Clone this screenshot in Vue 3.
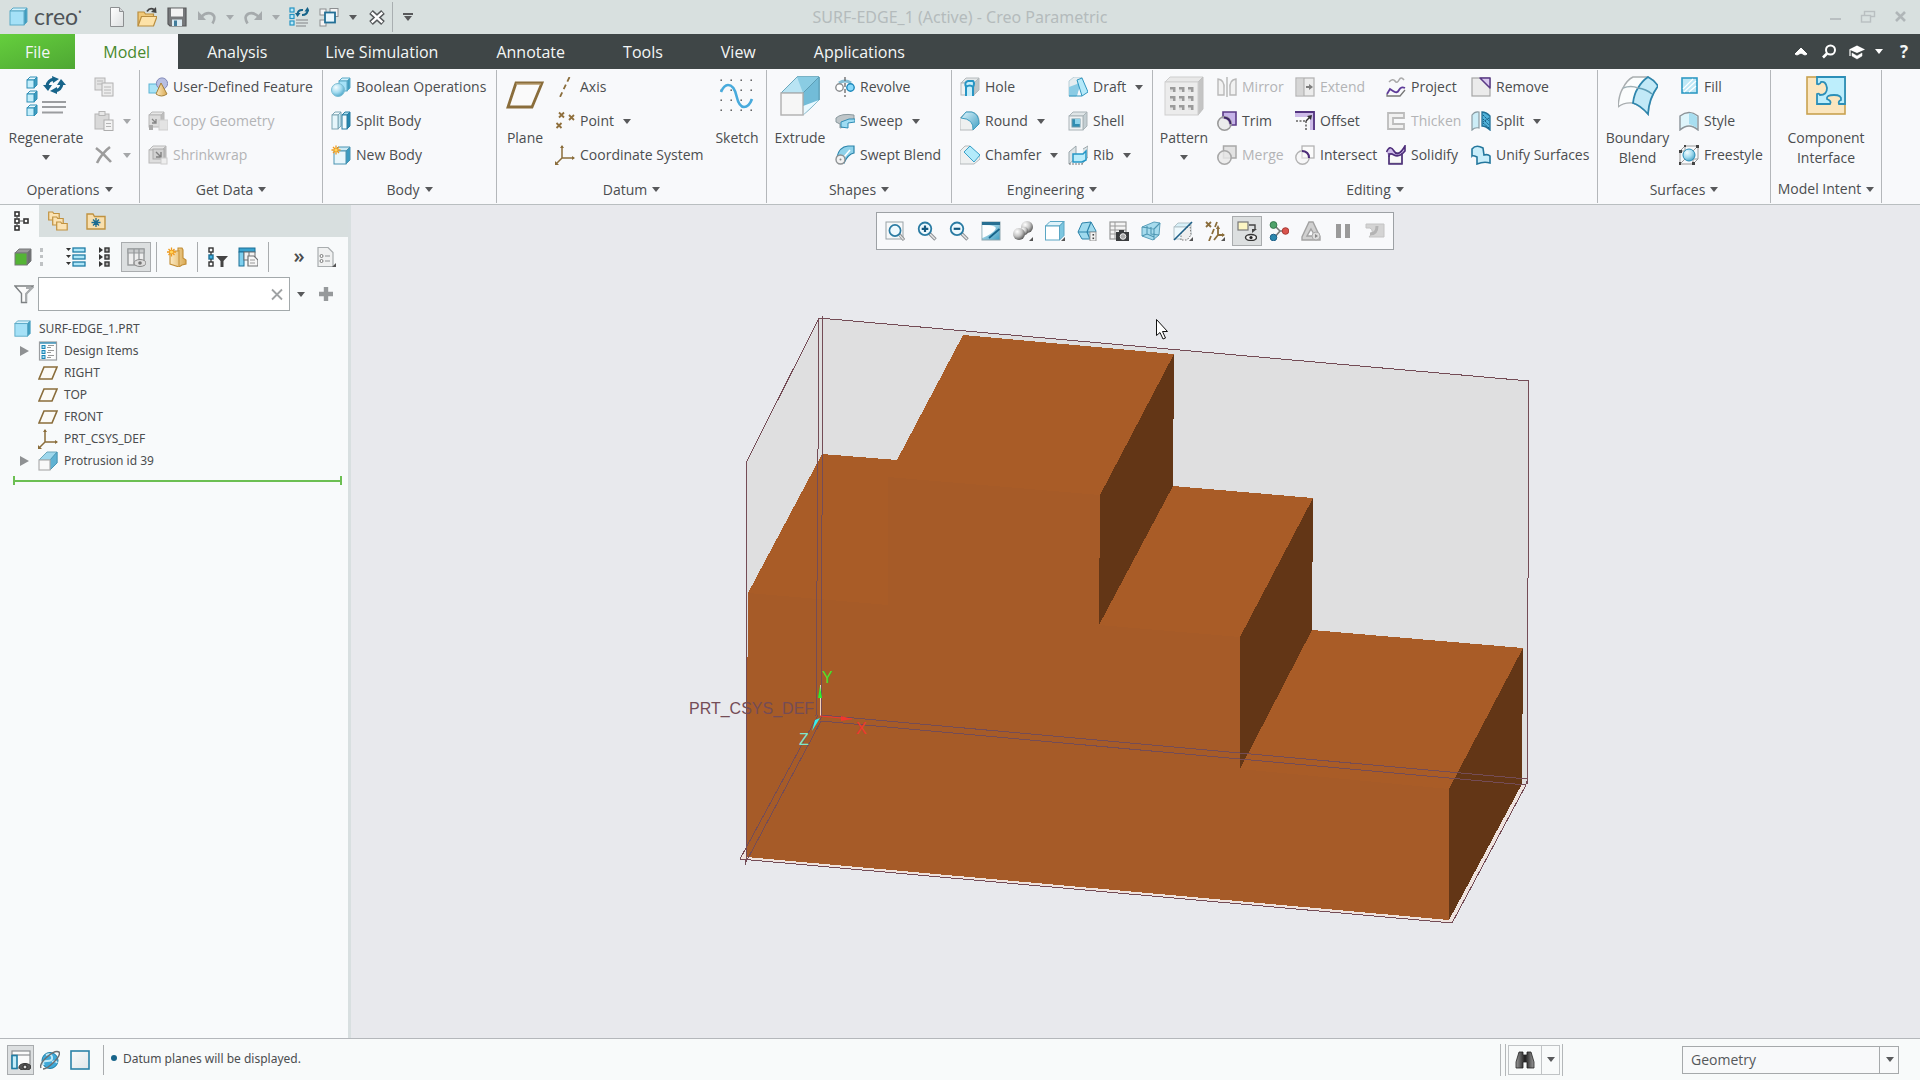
<script setup>
import { h, ref } from 'vue'

const poly = (pts, fill, stroke = 'none', extra = '') =>
  `<polygon points="${pts}" fill="${fill}" stroke="${stroke}" stroke-linejoin="round" ${extra}/>`
const path = (d, stroke, width = 1.5, fill = 'none', extra = '') =>
  `<path d="${d}" fill="${fill}" stroke="${stroke}" stroke-width="${width}" ${extra}/>`
const rect = (x, y, w, hh, fill, stroke = 'none', width = 1) =>
  `<rect x="${x}" y="${y}" width="${w}" height="${hh}" fill="${fill}" stroke="${stroke}" stroke-width="${width}"/>`
const circle = (x, y, r, fill, stroke = 'none', width = 1) =>
  `<circle cx="${x}" cy="${y}" r="${r}" fill="${fill}" stroke="${stroke}" stroke-width="${width}"/>`
const box = (x, y, w, hh, d, front, top, side, line) =>
  poly(`${x},${y + d} ${x + d},${y} ${x + w + d},${y} ${x + w},${y + d}`, top, line) +
  poly(`${x + w},${y + d} ${x + w + d},${y} ${x + w + d},${y + hh} ${x + w},${y + hh + d}`, side, line) +
  rect(x, y + d, w, hh, front, line)
const bluebox = (x, y, w, hh, d) => box(x, y, w, hh, d, '#a5e1f7', '#d3f1fb', '#3f9dbf', '#5aa9c6')
const star = (x, y) => path(`M${x} ${y - 4.5}v9M${x - 4.5} ${y}h9M${x - 3} ${y - 3}l6 6M${x - 3} ${y + 3}l6 -6`, '#f09a1c', 1.3) + circle(x, y, 1.6, '#ffd65c')
const lens = sign => path('M12.5 12.5L18.5 18.5', '#8e9194', 3.4) + path('M13 13L18 18', '#e8e8e8', 1.4) + circle(8, 7.8, 6.3, '#eef9fe', '#2a7ba3', 1.8) + path(sign, '#14587f', 2.2)
const corner = poly('20,16 20,20 16,20', '#555')

const icons = {
  cube: bluebox(1, 1, 14, 14, 3),
  page: path('M3.5 .5h9l4 4v15h-13z', '#8c8f91', 1, 'url(#gPage)') + path('M12.5 .5v4h4', '#8c8f91', 1, '#d5d8da'),
  open: path('M1 5h6l1.5 2h8v11H1z', '#b98d3f', 1.2, '#f0c878') + path('M4.5 9.5H20L16.5 19H1z', '#b98d3f', 1.2, '#fde2a8') + path('M10 4.5Q13 0 17 2.5', '#444', 1.8) + poly('19,0 19.5,6 14,5', '#444'),
  save: path('M1 1h18v18H3l-2 -2z', '#58595b', 1.2, '#77797b') + rect(4, 1.5, 12, 8, '#f3f3f3') + rect(5, 12.5, 10, 6.5, '#dcebf2') + rect(7, 13.5, 3, 5.5, '#417d9b'),
  undo: path('M4 10Q9 5 14 6.5Q20 9 15.5 16.5', '#a5aaac', 2.6) + poly('1,4 1,13 9,13', '#a5aaac'),
  redo: path('M16 10Q11 5 6 6.5Q0 9 4.5 16.5', '#a5aaac', 2.6) + poly('19,4 19,13 11,13', '#a5aaac'),
  regenSmall: [1, 7.5, 14].map(y => rect(1, y, 4, 4, '#bfe9f8', '#2494c4', 1.2)).join('') + path('M8.5 7Q9 2.5 14 3', '#17648a', 2) + path('M18.5 3Q18.5 8 13 8', '#17648a', 2) + poly('6,6 11.5,6 8.5,10', '#17648a') + poly('15.5,4.5 21,4.5 18.5,0', '#17648a') + path('M7 13h12M7 16h12M7 19h10', '#9fa3a5', 1.4),
  windows: rect(1, 2, 6, 6, '#f4f4f4', '#8b8e90') + rect(11, 1.5, 8, 8, '#f4f4f4', '#8b8e90') + rect(1, 13, 6, 6, '#f4f4f4', '#8b8e90') + rect(6, 5.5, 10, 10, '#e9f7fd', '#226f96', 1.8),
  closeWin: path('M4 5l12 11M16 5l-12 11', '#55585a', 5.4) + path('M4.700 5.600l10.600 9.800M15.300 5.600l-10.600 9.800', '#fff', 2.4),
  minimize: rect(5, 11, 11, 2, '#b9bfc1'),
  restore: rect(6.5, 4.5, 10, 5, 'none', '#b9bfc1', 1.4) + rect(3.5, 8.5, 9, 6.5, '#d8e0df', '#b9bfc1', 1.4),
  shut: path('M5 5l9 9M14 5l-9 9', '#b0b6b8', 2.6),
  up: path('M4 12l6 -6l6 6l-2 1l-4 -2l-4 2z', '#fff', 1, '#fff'),
  search: circle(11.5, 8, 4.5, 'none', '#fff', 2) + path('M8 11.5L4 15.5', '#fff', 2.6),
  hat: poly('10,3.5 18,7.5 10,11 2,7.5', '#fff') + path('M5 11l5 3l5 -3v3l-5 3l-5 -3z', '#fff', 0.5, '#fff') + path('M3 8v6', '#fff', 1.2),
  regen: [0, 14, 28].map(y => box(1, y + 1, 7, 8, 3, '#c4eefb', '#e8f8fd', '#3f9dbf', '#2f8fb6')).join('') + path('M21 10Q22 4 28 3', '#17648a', 3) + path('M36 8Q35 14 29 15', '#17648a', 3) + poly('17,9 26,9 22,15', '#17648a') + poly('31,9 40,9 35,3', '#17648a') + poly('26,0 33,3 27,7', '#17648a') + poly('31,11 24,15 31,18', '#17648a') + path('M16 26h24M16 31h24M16 36.5h21', '#9b9da0', 2),
  copy: rect(1, 1, 10, 12, '#e4e4e4', '#b5b5b5') + rect(8, 6, 11, 13, '#ededed', '#b0b0b0') + path('M10 10h7M10 13h7M10 16h7M3 4h6M3 7h5', '#b8b8b8', 1),
  paste: rect(1, 3, 14, 15, '#d9d9d9', '#b5b5b5') + rect(5, 0.5, 6, 4, '#e8e8e8', '#b5b5b5') + rect(10, 9, 9, 10.5, '#f3f3f3', '#adadad') + path('M12 12.5h5M12 15.5h5', '#b5b5b5', 1),
  del: path('M2 3Q10 9 17 17M16 2Q8 8 3 18', '#9c9c9c', 2.6),
  udf: rect(1, 7, 10, 9, '#a9e3f6', '#5cb4d4') + circle(14, 6.5, 5.6, '#b8bfe2', '#8088b8') + path('M13 6L19 17Q13.5 21 8 17z', '#a5813c', 1, 'url(#gTan)'),
  copyGeo: box(1, 1, 12, 12, 3, '#dcdcdc', '#e6e6e6', '#bdbdbd', '#b8b8b8') + rect(11, 9, 9, 10, '#e3e3e3', '#cfcfcf') + path('M4 8l4 4M8 8v4h-4', '#858585', 1.3) + rect(1, 14, 4, 5, '#aaa'),
  shrink: box(1, 1, 13, 13, 4, '#dedede', '#e6e6e6', '#bdbdbd', '#b8b8b8') + rect(5, 4, 11, 10, '#d0d0d0', '#aaa') + path('M8 7l5 5M13 7v5h-5', '#7f7f7f', 1.4) + rect(13, 13, 6, 6, '#eee', '#ccc'),
  bool: bluebox(8, 1, 8, 10, 3) + circle(7, 13, 6.5, 'url(#gBall)', '#7bbdd3'),
  splitBody: box(1, 1, 6, 14, 3, '#e6f6fb', '#f5fbfd', '#c3e6f1', '#7da5b4') + box(11, 1, 5, 14, 3, '#f2fafd', '#a8dbec', '#2687b0', '#2a7ea2'),
  newBody: box(3, 2, 12, 13, 4, '#e8f6fb', '#cdeaf4', '#3b9cc1', '#4a94b2') + star(5, 5),
  plane: `<path d="M11 7h26L27 31H3z" fill="#fafafa" stroke="#8a6d3b" stroke-width="2.8"/><path d="M11 8h25" stroke="#cbb183"/>`,
  planeSmall: path('M6 4h13l-5 12H1z', '#8a6d3b', 1.6, '#fbfaf6'),
  axis: path('M14.5 0L5 20', '#8a6d3b', 1.8, 'none', 'stroke-dasharray="5 3.5"'),
  point: path('M4 1.5l5 5M9 1.5l-5 5M14 4l5 5M19 4l-5 5M1.5 12l5 5M6.5 12l-5 5', '#8f6f3c', 1.8),
  csys: path('M7 1v12h12M7 13L1 19', '#8a6d3b', 1.5) + poly('5,3 7,0 9,3', '#8a6d3b') + poly('17,11 20,13 17,15', '#8a6d3b') + poly('0,20 0,16 4,20', '#8a6d3b'),
  sketch: [4, 14, 24, 34].map(y => [4, 14, 24, 34].map(x => rect(x - 0.5, y - 0.5, 1.4, 1.4, '#444')).join('')).join('') + path('M4 16Q7 9 11 9Q17 9 19.5 20Q22 31 27 31Q32 31 35 23', '#48abdd', 2.6),
  extrude: poly('1,17 17,1 39,1 39,24 23,39 23,17', '#9ed7ec', '#6da8bc') + poly('17,1 39,1 39,24 17,24', 'url(#gBlue)', '#5ba5c0') + poly('1,17 17,1 39,1 23,17', '#b9e4f3', '#6da8bc') + poly('17,1 39,1 23,17', '#8accE3') + poly('23,17 39,1 39,24 23,39', '#72bcd8', '#5b9db5') + poly('23,30 39,24 23,39', '#e8f9ff') + rect(1, 17, 22, 22, '#f6f6f6', '#b0b0b0', 1.4),
  extrudeSmall: poly('1,9 9,1 19,1 19,12 12,19 12,9', '#9ed7ec', '#6da8bc') + poly('12,9 19,1 19,12 12,19', '#5fb2d3', '#4b97b7') + rect(1, 9, 11, 10, '#f8f8f8', '#b0b0b0', 1.2),
  revolve: path('M4 6Q10 2 16 6', '#84bdd3', 3) + circle(4.5, 10.5, 3.7, '#fff', '#8b8e90', 1.4) + circle(15.5, 10.5, 3.7, '#8adafa', '#1d88bb', 1.4) + path('M10 0v20', '#666', 1.3, 'none', 'stroke-dasharray="4 2"'),
  sweep: path('M1 7Q6 2 19 4v4Q12 9 12 15l-7 2v-4L1 11z', '#8a999e', 1, '#bfc6c9') + path('M6 11l8 -3h6v3l-7 1v5l-7 -1z', '#2f8db5', 1, '#9fdcf2'),
  sweptBlend: path('M2 12Q4 2 13 1h6v7Q13 9 9 18z', '#2a83aa', 1.2, '#8fd2ea') + path('M9 12L15 5', '#fff', 1.6) + circle(5.5, 14.5, 4.5, '#f2f2f2', '#8d9193', 1.4) + circle(5.5, 14.5, 1, '#888'),
  hole: box(1, 1, 13, 12, 5, '#f0f2f2', '#e3e7e8', '#bcc5c8', '#b5babc') + path('M6 19v-9Q4 5 8 4h5Q15 6 13 10v9M6 10q4 -3 7 0', '#2695c4', 2, '#c9effb'),
  round: path('M0 7L6 1h5Q19 2 19 10v3l-6 6H0z', '#b5babc', 1, '#eef0f0') + path('M6 1h6Q19 3 19 13l-6 6Q14 8 1 7z', '#3c9cc0', 1, 'url(#gBlue)'),
  chamfer: path('M0 6L5 1h5l10 10v3l-6 5H0z', '#b5babc', 1, '#eef0f0') + poly('10,1 20,10 14,17 4,7', '#b3ebfb', '#3aa0c8'),
  draft: poly('1,4 6,0 14,0 8,19 1,19', '#e6edf0', '#b9cfd7') + poly('1,10 9,7 14,1 9,19 1,19', '#8acbe4') + poly('9,3 14,1 20,15 14,19', '#b5e9f9', '#2f95bf') + path('M1 19h13', '#2f95bf', 1),
  shell: box(1, 1, 14, 14, 4, '#eef1f2', '#dfe5e7', '#c3ced2', '#a9b3b7') + rect(4, 8, 8, 8, '#2f8eb3', '#6f9aa9') + rect(7, 8, 5, 5, '#8fd3ea'),
  rib: path('M1 7L8 1v12l-7 6zM15 4l5 -3v11l-6 7', '#9ba6ab', 1, '#dce4e7') + path('M5 9h10l3 -3v9l-4 2H5z', '#2496c6', 1.5, '#b9ecfb') + path('M1 19h14', '#777', 1, 'none', 'stroke-dasharray="2 1"'),
  pattern: poly('1,6 6,1 39,1 34,6', '#e8e8e8', '#cdcdcd') + poly('34,6 39,1 39,33 34,39', '#c4c4c4', '#c0c0c0') + rect(1, 6, 33, 33, '#ececec', '#cfcfcf') + [11, 20, 29].map(y => [6, 15, 24].map(x => rect(x, y, 5.5, 5, '#9a9a9a') + rect(x, y + 2.5, 3, 2.5, '#dedede')).join('')).join(''),
  mirror: path('M1 2Q8 3 7 12v6H1zM19 2Q12 3 13 12v6h6z', '#b9b9b9', 1.4, '#f2f2f2') + path('M10 0v20', '#a9a9a9', 1.2),
  trim: path('M6 1h13v13h-6Q12 7 6 7z', '#5a3a86', 1.6, '#c6b3e8') + circle(7.5, 12.5, 6.7, '#e4e4e4aa', '#9a9a9a', 1.6) + path('M7 6.5Q13 7 13.5 13', '#3d2366', 1.8),
  merge: rect(6.5, 1, 12.5, 12, '#e2e2e2', '#a8a8a8', 1.5) + circle(7.5, 12.5, 6.7, '#e9e9e9cc', '#a8a8a8', 1.6),
  extend: rect(1, 1, 18, 18, '#ececec', '#b5b5b5', 1.3) + rect(2, 2, 7, 16, '#d6d6d6') + path('M9 1v18', '#aaa', 1) + path('M11 10h4', '#7d7d7d', 2) + poly('14,7 18,10 14,13', '#7d7d7d'),
  offset: rect(0, 1, 20, 5, '#cdbbe8') + rect(15, 1, 5, 18, '#cdbbe8') + path('M0 1h19v18', '#533480', 1.8) + path('M1 10h10M11 10v9', '#666', 1.6, 'none', 'stroke-dasharray="2 1.5"') + path('M11 10l4 -4', '#333', 1.5) + poly('17,4 12,5 16,9', '#333'),
  intersect: rect(7, 1, 12, 12, '#fbfbfb', '#b3b3b3', 1.3) + circle(7.5, 12.5, 6.7, '#f6f6f688', '#b3b3b3', 1.4) + path('M7 6Q14 6.5 14 13', '#4c2c79', 2),
  project: path('M3 5q4 -4 6 -1t4 -1t5 0', '#aaa', 1.6) + path('M1 17L4 12l3 2q4 3 6 -1t6 -2', '#5f3c99', 1.8) + path('M1 17v2h13l5 -6', '#777', 1.3),
  thicken: path('M2 2h16v5H7v6h11v5H2z', '#bcbcbc', 1.8, '#f1f1f1'),
  solidify: rect(3, 8, 13, 10.5, '#f8f8f8', '#6a6a7a', 1.4) + path('M0.5 7Q4 -1 8 6t11 -5v5Q13 13 8 10T3 12', '#4c2c79', 1.6, '#cdbbe8') + path('M3 8v11h13V8', '#533480', 1.5),
  remove: rect(1, 1, 18, 18, '#ebebeb', '#a5a5a5', 1.2) + poly('9,1 19,1 19,11', '#d9c8ee', '#5a3a86', 'stroke-width="1.5"'),
  split: path('M1 4Q4 0 8 1v16q-4 -1 -7 2z', '#8a9ba2', 1.2, '#ccedf7') + path('M11 1Q15 1 19 5v14q-4 -4 -8 -4z', '#1f6f96', 1.3, '#51b2da') + path('M12 4l6 6M12 8l6 6M12 12l6 5M18 7l-6 4', '#155b80', 1, 'none', 'stroke-dasharray="2 1"'),
  unify: path('M1 4Q5 -1 12 3l1 7Q17 9 19 11v7q-6 -2 -13 1v-7Q2 10 1 11z', '#24779d', 1.6, '#caeefa'),
  blend: path('M0 31Q1 18 5 12Q9 4 15 1H30Q36 4 40 10Q31 22 30 38Q22 29 15 27Q6 26 0 31z', '#a9aeb0', 1.4, '#fbfdfd') + path('M20 12Q24 5 30 1Q36 4 40 10Q31 22 30 38Q22 29 15 27Q16 18 20 12z', '#2e86ad', 1.8, '#c2e9f7') + path('M20 12Q28 13 34 18', '#5f9db5', 1.6) + path('M5 12Q13 9 20 12', '#9fb0b6', 1.5),
  fill: rect(3, 1, 15, 15, '#bfe8f6', '#2f9ac4', 1.6) + path('M4 12L14 2M5 15L17 4M10 15L17 9', '#fff', 1.2),
  style: path('M1 5Q10 -2 19 5v14q-9 -8 -18 0z', '#8c9499', 1.4, '#dff5fb') + path('M10 2Q15 2 18 6v11q-4 -3 -8 -4z', 'none', 0, '#a8def0'),
  freestyle: rect(1, 6, 13, 13, 'none', '#999', 1) + path('M1 6l5 -5h13v13l-5 5M14 6l5 -5M6 1v13l-5 5M6 14h13', '#9a9a9a', 1) + circle(10, 10, 6, 'url(#gBall)', '#2a8fb9') + rect(0, 5, 3, 3, '#444') + rect(5, 0, 2, 2, '#444') + rect(17, 0, 3, 3, '#444') + rect(13, 17, 3, 3, '#444') + rect(0, 17, 2, 3, '#444'),
  component: rect(1, 1, 38, 37, '#fbe6bf', '#c9a250', 1.6) + path('M11 1H39V28H33Q32 25 35 24Q36 19 28 19Q20 19 21 23Q26 25 24 28H11V18Q13 17 14 19Q21 19 21 12Q20 5 15 6Q14 9 11 8z', '#2c8fb8', 1.8, '#bdeefc'),

  tree: '<g transform="translate(4 0)">' + rect(1, 1, 4, 4, '#fff', '#333', 1.6) + rect(1, 8, 4, 4, '#fff', '#333', 1.6) + rect(1, 15, 4, 4, '#fff', '#333', 1.6) + rect(10, 8, 4, 4, '#fff', '#333', 1.6) + path('M3 5v3M3 12v3M5 10h5', '#555', 1.2) + '</g>',
  folders: [[0, 0], [4, 5], [8, 10]].map(([x, y]) => path(`M${x + 0.7} ${y + 1}h4l1 1.5h5.5v6.5h-10.5z`, '#c09240', 1.2, '#fbe3b4')).join(''),
  favorite: path('M1 3h6l1.5 2.5H19V18H1z', '#c09240', 1.4, '#f8dfae') + path('M10 7v9M5.5 11.5h9M7 8.5l6 6M13 8.5l-6 6', '#1c6b90', 1.3),
  green: box(1, 2, 12, 12, 4, '#54b435', '#999', '#6d6f71', '#77797a'),
  expand: [1, 8, 15].map(y => rect(7, y, 12, 4, '#aee6f8', '#1f7da5', 1.3) + poly(`0,${y} 5,${y} 2.5,${y + 3}`, '#333')).join(''),
  collapse: [1, 8, 15].map(y => rect(9, y, 4, 4, '#aaa', '#333', 1.4) + poly(`3,${y - 1} 7,${y + 2} 3,${y + 5}`, '#333')).join(''),
  columns: rect(2, 2, 16, 16, '#eee', '#96999b', 1.4) + rect(2, 2, 16, 4, '#c9cbcc', '#96999b') + path('M8 2v16M13 2v10', '#96999b', 1.3) + `<ellipse cx="14" cy="16" rx="6" ry="3.5" fill="#ddd" stroke="#888"/>` + circle(14, 16, 1.8, '#777'),
  newFolder: path('M3 4h8V1h4l1 2v8l3 2v4l-4 1l-3 2l-9 -3z', '#c28d35', 1.1, 'url(#gTan)') + path('M12 3v16', '#c28d35', 1) + star(4.5, 5),
  treeFilter: rect(1, 1, 4, 4, '#fff', '#333', 1.4) + rect(1, 8, 4, 4, '#45b3e2', '#1d6f95', 1.4) + rect(1, 15, 4, 4, '#fff', '#333', 1.4) + path('M3 5v3M3 12v3', '#333', 1.2) + poly('8,9 20,9 15.5,14 15.5,20 12.5,20 12.5,14', '#444'),
  treeCols: rect(1, 1, 16, 4, '#3aa3cf', '#1d6f95') + rect(1, 5, 5, 14, '#7ed0ef', '#1d6f95') + rect(6, 5, 11, 8, '#f2f2f2', '#6b6e70') + path('M11 5v8', '#6b6e70', 1) + path('M10 9h6l4 4v6H10z', '#707274', 1.2, '#f7f7f7') + path('M12 13h5M12 16h5', '#999', 1),
  report: path('M2 .5h10l5 5v14H2z', '#a9adaf', 1.2, '#f0f1f1') + path('M9 9h5M9 14h5', '#909395', 1.2) + circle(5.5, 9, 1.5, '#fff', '#777') + circle(5.5, 14, 1.5, '#fff', '#777') + corner,
  funnel: path('M1 2h18L12.5 9.5v9H7.5v-9z', '#7d8183', 1.4, '#fafafa') + path('M12 4h6l-6 6v8', '#a9acae', 2),
  clear: path('M5 5.500l10 10M15 5.500l-10 10', '#9fa2a4', 1.8),
  plus: path('M10 3v14M3 10h14', '#96999b', 4.4),
  items: rect(1.5, 1, 17, 18, '#fdfdfd', '#9a9da0', 1.2) + path('M2 2h16', '#2d8ab3', 1.4) + [4.5, 9.5, 14.5].map(y => rect(4, y, 3, 3, '#9fdef5', '#1f86b5') + path(`M10 ${y}h6M9 ${y + 2}h4`, '#999', 1)).join(''),

  refit: rect(1, 1, 17, 17, '#f6f8f9', '#9aa3a7') + path('M14 13l5 6', '#909496', 3.2) + path('M14.500 14l4 4.500', '#e4e4e4', 1.200) + circle(10, 9.5, 5.6, '#eef9fe', '#2a7ba3', 1.7),
  zoomIn: lens('M8 4.5v6.6M4.7 7.8h6.6'),
  zoomOut: lens('M4.7 7.8h6.6'),
  repaint: rect(1, 1, 18, 18, 'url(#gBlue)', '#8fa7b0') + path('M1.5 4Q18 4 14 9Q11 13 1.5 17z', 'none', 0, '#fbfdfe') + rect(1, 1, 18, 3, '#276f92') + path('M18.5 8L8 17', '#17648a', 1.8),
  shading: circle(14, 6, 6, 'url(#gGray)') + circle(11, 10, 4, 'url(#gGray)') + circle(6, 13, 6, 'url(#gGray)') + corner,
  hidden: box(0.5, 0.5, 14, 14, 4.5, '#fff', '#dff3fa', '#7cc6e0', '#5aa6c4') + corner,
  views: poly('1,11 5,2 14,1 19,10 16,18 5,18', '#9fdaee', '#2d83a9') + path('M1 11h9L14 1M10 11l3 7M10 11h9', '#2d83a9', 1.2) + rect(13, 11, 6, 9, '#f2f2f2', '#999') + rect(15.5, 13, 1.6, 1.6, '#444') + rect(15.5, 16.5, 1.6, 1.6, '#444'),
  viewMgr: rect(1, 1, 16, 17, '#f4f4f4', '#999', 1.2) + path('M1 5h16M1 9h16M1 13h16M6 1v17', '#999', 1) + rect(7, 11, 13, 9, '#3b3d3f') + rect(10, 9, 5, 3, '#3b3d3f') + circle(14, 15.5, 2.8, '#aaa', '#eee'),
  persp: poly('1,6 13,1 19,2 18,14 12,19 1,15', '#a6dbed', '#5aa0bb') + path('M1 6l12 2v11M13 8l6 -6M6 5v8l7 3M6 13l-5 2M10 6v7l8 1', '#4f97b3', 1.1),
  section: box(1, 2, 13, 12, 4, '#eef9fd', '#d8f0f8', '#e4e4e4', '#b2c3c9') + poly('8,19 8,12 17,4 18,14 14,19', '#efefef', '#777', 'stroke-dasharray="1.5 1.5"') + path('M1 19L19 1', '#1d5f87', 1.6) + corner,
  datum: path('M1 1l5 5M6 1l-5 5M12 1l-2 5M9 8l-2 5M6 15l-2 5', '#8a6d3b', 1.8) + path('M13 7v7h6M13 14l-4 5', '#8a6d3b', 1.8) + poly('11,8 13,4 15,8', '#8a6d3b') + poly('17,12 20,14 17,16', '#8a6d3b') + corner,
  annotate: rect(1, 1, 10, 8, '#fdf6c4', '#777', 1.2) + path('M12 4h6v5', '#444', 1.4) + poly('15,8 20,8 15,12', '#444') + `<ellipse cx="14" cy="16.5" rx="5.5" ry="3" fill="#eee" stroke="#333" stroke-width="1.4"/>` + circle(14, 16.5, 1.6, '#222'),
  spin: path('M5 4l6 6h6M11 10l-6 7', '#777', 1.6) + circle(4.5, 4, 3.4, '#4fa36b', '#367a4d') + circle(16.5, 10, 3.3, '#d9544d', '#a93a35') + circle(4.5, 16.5, 3.3, '#2a87ae', '#1d5f87'),
  analysis: path('M8 1h4L19 16v3H1v-3z M10 8l4 7H6z', '#a2a2a2', 1.4, '#d0d0d0', 'fill-rule="evenodd"') + circle(15, 15, 4, '#ddd', '#aaa') + poly('14,13 17,15 14,17', '#888'),
  pause: rect(3, 3, 5, 14, '#9a9a9a') + rect(12, 3, 5, 14, '#9a9a9a'),
  resume: path('M1 3h18v13H4q6 -6 1 -9H1z', '#c4c4c4', 1, '#d4d4d4') + path('M5 13q7 0 7 -8', '#b4b4b4', 3),

  navigator: rect(1, 1, 18, 17, '#fafafa', '#8b8e90', 1.2) + path('M1 5h18', '#8b8e90', 1.2) + rect(1, 5.5, 5, 13, '#c5edf9', '#1f7da5', 1.6) + `<ellipse cx="14" cy="17" rx="6" ry="3.5" fill="#555" stroke="#333"/>` + circle(14, 17, 2, '#ddd', '#222'),
  globe: circle(10, 10.5, 8, '#3fa9d9', '#1f7da5') + path('M6 5q5 -2 6 2t-5 4t-3 4M12 12q4 -2 5 1', '#bfe9f8', 2) + path('M1 18Q-1 14 7 7T19 2Q21 5 14 12T3 19', '#6b6e70', 1.4),
  square: rect(1, 1, 18, 18, 'url(#gSquare)', '#2b83a8', 1.6),
  binoculars: path('M4 2h4v3h4V2h4l3 10v6h-7v-6H8v6H1v-6z', '#222', 0.8, 'url(#gBino)')
}

const Icon = props =>
  h('svg', {
    width: props.size, height: props.size, viewBox: `0 0 ${props.size > 24 ? 40 : 20} ${props.size > 24 ? 40 : 20}`,
    'aria-hidden': 'true', focusable: 'false', innerHTML: icons[props.name]
  })
Icon.props = ['name', 'size']

const quick = [
  { icon: 'page', tip: 'New' }, { icon: 'open', tip: 'Open' }, { icon: 'save', tip: 'Save' },
  { icon: 'undo', tip: 'Undo', menu: 'light' }, { icon: 'redo', tip: 'Redo', menu: 'light' },
  { icon: 'regenSmall', tip: 'Regenerate' }, { icon: 'windows', tip: 'Windows', menu: 'dark' }, { icon: 'closeWin', tip: 'Close' }
]
const tabs = ['File', 'Model', 'Analysis', 'Live Simulation', 'Annotate', 'Tools', 'View', 'Applications']

const item = (icon, text, opt = {}) => ({ icon, text, ...opt })
const off = { off: true }
const menu = { menu: true }
const groups = [
  { id: 'operations', label: 'Operations', cols: [
    { big: 'regen', lines: ['Regenerate'], menu: true },
    { items: [item('copy', '', { off: true, tip: 'Copy' }), item('paste', '', { off: true, menu: true, tip: 'Paste' }), item('del', '', { off: true, menu: true, tip: 'Delete' })] }] },
  { id: 'data', label: 'Get Data', cols: [
    { items: [item('udf', 'User-Defined Feature'), item('copyGeo', 'Copy Geometry', off), item('shrink', 'Shrinkwrap', off)] }] },
  { id: 'body', label: 'Body', cols: [
    { items: [item('bool', 'Boolean Operations'), item('splitBody', 'Split Body'), item('newBody', 'New Body')] }] },
  { id: 'datum', label: 'Datum', cols: [
    { big: 'plane', lines: ['Plane'] },
    { items: [item('axis', 'Axis'), item('point', 'Point', menu), item('csys', 'Coordinate System')] },
    { big: 'sketch', lines: ['Sketch'] }] },
  { id: 'shapes', label: 'Shapes', cols: [
    { big: 'extrude', lines: ['Extrude'] },
    { items: [item('revolve', 'Revolve'), item('sweep', 'Sweep', menu), item('sweptBlend', 'Swept Blend')] }] },
  { id: 'engineering', label: 'Engineering', cols: [
    { items: [item('hole', 'Hole'), item('round', 'Round', menu), item('chamfer', 'Chamfer', menu)] },
    { items: [item('draft', 'Draft', menu), item('shell', 'Shell'), item('rib', 'Rib', menu)] }] },
  { id: 'editing', label: 'Editing', cols: [
    { big: 'pattern', lines: ['Pattern'], menu: true },
    { items: [item('mirror', 'Mirror', off), item('trim', 'Trim'), item('merge', 'Merge', off)] },
    { items: [item('extend', 'Extend', off), item('offset', 'Offset'), item('intersect', 'Intersect')] },
    { items: [item('project', 'Project'), item('thicken', 'Thicken', off), item('solidify', 'Solidify')] },
    { items: [item('remove', 'Remove'), item('split', 'Split', menu), item('unify', 'Unify Surfaces')] }] },
  { id: 'surfaces', label: 'Surfaces', cols: [
    { big: 'blend', lines: ['Boundary', 'Blend'] },
    { items: [item('fill', 'Fill'), item('style', 'Style'), item('freestyle', 'Freestyle')] }] },
  { id: 'intent', label: 'Model Intent', cols: [{ big: 'component', lines: ['Component', 'Interface'] }] }
]

const tree = [
  { icon: 'items', text: 'Design Items', open: true },
  { icon: 'planeSmall', text: 'RIGHT' },
  { icon: 'planeSmall', text: 'TOP' },
  { icon: 'planeSmall', text: 'FRONT' },
  { icon: 'csys', text: 'PRT_CSYS_DEF' },
  { icon: 'extrudeSmall', text: 'Protrusion id 39', open: true }
]
const viewTools = [
  ['refit', 'Refit'], ['zoomIn', 'Zoom In'], ['zoomOut', 'Zoom Out'], ['repaint', 'Repaint'], ['shading', 'Rendering'],
  ['hidden', 'Display Style'], ['views', 'Saved Orientations'], ['viewMgr', 'View Manager'], ['persp', 'Perspective'],
  ['section', 'Sections'], ['datum', 'Datum Display'], ['annotate', 'Annotation Display'], ['spin', 'Spin Center'],
  ['analysis', 'Simulate'], ['pause', 'Pause'], ['resume', 'Resume']
]
const search = ref('')
const filter = ref('Geometry')
</script>

<template>
  <div class="app">
    <svg class="defs" width="0" height="0" aria-hidden="true">
      <defs>
        <linearGradient id="gBlue" x1="0" y1="0" x2="1" y2="1"><stop offset="0" stop-color="#dff5fc" /><stop offset="1" stop-color="#3f9ec2" /></linearGradient>
        <linearGradient id="gPage" x1="0" y1="0" x2="1" y2="1"><stop offset="0" stop-color="#ffffff" /><stop offset="1" stop-color="#dcdfe0" /></linearGradient>
        <linearGradient id="gTan" x1="0" y1="0" x2="1" y2="0"><stop offset="0" stop-color="#fdebc4" /><stop offset="1" stop-color="#d9a952" /></linearGradient>
        <linearGradient id="gSquare" x1="0" y1="0" x2="1" y2="1"><stop offset="0" stop-color="#fafafa" /><stop offset="1" stop-color="#dfe7ea" /></linearGradient>
        <linearGradient id="gBino" x1="0" y1="0" x2="1" y2="0"><stop offset="0" stop-color="#9a9a9a" /><stop offset="0.5" stop-color="#1d1d1d" /><stop offset="1" stop-color="#9a9a9a" /></linearGradient>
        <radialGradient id="gBall" cx="0.35" cy="0.3" r="0.8"><stop offset="0" stop-color="#f4fcff" /><stop offset="0.5" stop-color="#a4dcf0" /><stop offset="1" stop-color="#3f9dc2" /></radialGradient>
        <radialGradient id="gGray" cx="0.35" cy="0.3" r="0.8"><stop offset="0" stop-color="#fff" /><stop offset="0.5" stop-color="#c2c2c2" /><stop offset="1" stop-color="#444" /></radialGradient>
      </defs>
    </svg>

    <header class="titlebar">
      <div class="brand"><Icon name="cube" size="20" /><span class="name">creo</span><span class="dot">•</span></div>
      <div class="quick">
        <template v-for="q in quick" :key="q.icon">
          <button type="button" class="tool" :aria-label="q.tip"><Icon :name="q.icon" size="20" /></button>
          <button v-if="q.menu" type="button" class="drop" :class="q.menu" :aria-label="q.tip + ' list'"><i class="tri"></i></button>
        </template>
        <button type="button" class="customize" aria-label="Customize toolbar"><i class="tri"></i></button>
      </div>
      <h1>SURF-EDGE_1 (Active) - Creo Parametric</h1>
      <div class="window">
        <button type="button" aria-label="Minimize"><Icon name="minimize" size="20" /></button>
        <button type="button" aria-label="Restore"><Icon name="restore" size="20" /></button>
        <button type="button" aria-label="Close window"><Icon name="shut" size="20" /></button>
      </div>
    </header>

    <nav class="tabs">
      <button v-for="t in tabs" :key="t" type="button" :class="{ file: t === 'File', active: t === 'Model' }">{{ t }}</button>
      <div class="helpers">
        <button type="button" aria-label="Minimize ribbon"><Icon name="up" size="20" /></button>
        <button type="button" aria-label="Search"><Icon name="search" size="20" /></button>
        <button type="button" class="learn" aria-label="Learning"><Icon name="hat" size="20" /><i class="tri"></i></button>
        <button type="button" class="help" aria-label="Help">?</button>
      </div>
    </nav>

    <section class="ribbon">
      <div v-for="g in groups" :key="g.id" class="group" :class="g.id">
        <div class="cols">
          <template v-for="(c, i) in g.cols" :key="i">
            <button v-if="c.big" type="button" class="big">
              <Icon :name="c.big" size="40" />
              <span class="caption"><span v-for="l in c.lines" :key="l">{{ l }}</span></span>
              <i v-if="c.menu" class="tri"></i>
            </button>
            <div v-else class="list">
              <button v-for="b in c.items" :key="b.icon" type="button" class="item" :class="{ off: b.off }" :aria-label="b.tip">
                <Icon :name="b.icon" size="20" /><span v-if="b.text">{{ b.text }}</span><i v-if="b.menu" class="tri"></i>
              </button>
            </div>
          </template>
        </div>
        <button type="button" class="label">{{ g.label }}<i class="tri"></i></button>
      </div>
    </section>

    <main class="work">
      <aside class="side">
        <div class="sidetabs">
          <button type="button" class="active" aria-label="Model Tree"><Icon name="tree" size="20" /></button>
          <button type="button" aria-label="Folder Browser"><Icon name="folders" size="20" /></button>
          <button type="button" aria-label="Favorites"><Icon name="favorite" size="20" /></button>
        </div>
        <div class="sidetools">
          <button type="button" class="first" aria-label="Part"><Icon name="green" size="20" /></button>
          <span class="grip"></span>
          <button type="button" aria-label="Expand all"><Icon name="expand" size="20" /></button>
          <button type="button" aria-label="Collapse all"><Icon name="collapse" size="20" /></button>
          <button type="button" class="on" aria-label="Show columns"><Icon name="columns" size="20" /></button>
          <span class="bar"></span>
          <button type="button" aria-label="New folder"><Icon name="newFolder" size="20" /></button>
          <span class="bar"></span>
          <button type="button" aria-label="Tree filters"><Icon name="treeFilter" size="20" /></button>
          <button type="button" aria-label="Tree columns"><Icon name="treeCols" size="20" /></button>
          <span class="bar"></span>
          <button type="button" class="more" aria-label="More">»</button>
          <button type="button" aria-label="Settings"><Icon name="report" size="20" /></button>
        </div>
        <div class="find">
          <Icon name="funnel" size="20" />
          <div class="field">
            <input v-model="search" type="text" aria-label="Filter the tree" />
            <button type="button" aria-label="Clear"><Icon name="clear" size="20" /></button>
          </div>
          <button type="button" class="pick" aria-label="Filter options"><i class="tri"></i></button>
          <button type="button" class="add" aria-label="Add filter"><Icon name="plus" size="20" /></button>
        </div>
        <ul class="tree">
          <li class="root"><Icon name="cube" size="18" /><span>SURF-EDGE_1.PRT</span></li>
          <li v-for="n in tree" :key="n.text">
            <span class="twist"><i v-if="n.open"></i></span><Icon :name="n.icon" size="20" /><span>{{ n.text }}</span>
          </li>
        </ul>
        <div class="insert"></div>
      </aside>

      <div class="view">
        <svg class="model" viewBox="351 205 1569 833" role="img" aria-label="Stepped solid with datum planes">
          <g shape-rendering="crispEdges">
            <g fill="#dfdfe0">
              <polygon points="819,318 1529,381 1527,784 818,720" />
              <polygon points="747,461 819,318 818,720 746,859" />
              <polygon points="740,859 1452,923 1527,784 817,716" fill="#efe3de" />
            </g>
            <polygon fill="#a95c27" points="963,335 1174,354 1173,486 1313,498 1312,630 1523,648 1522,784 1449,920 746,857 748,593 822,454 897,460" />
            <polygon fill="#a65b28" points="748,593 888,605 888,477 1100,495 1099,625 1240,637 1240,769 1449,789 1449,920 746,857" />
            <g fill="#633616">
              <polygon points="1174,354 1173,486 1099,625 1100,495" />
              <polygon points="1313,498 1312,630 1240,769 1240,637" />
              <polygon points="1523,648 1522,784 1449,920 1449,789" />
            </g>
            <g fill="none" stroke="#744c56" stroke-width="1">
              <path d="M819 318L1529 381L1527 784" />
              <path d="M746 865L747 461L819 318" />
              <path d="M819 318L816 716M823 316L821 720" />
              <path d="M821 715L1527 779V784M821 721L1526 785L1452 923L740 859L818 715" />
              <path d="M821 721L746 862" />
            </g>
            <path d="M820 716V685" stroke="#f5d2b8" fill="none" />
            <path d="M821 716V662" stroke="#744c56" fill="none" />
          </g>
          <polygon points="820,686 822,698 818,698" fill="#2df02d" />
          <path d="M820 716L852 719" stroke="#f0372f" fill="none" />
          <polygon points="852,719 841,716 841,721" fill="#f0372f" />
          <polygon points="820,718 815,720 812,731" fill="#35efef" />
          <g class="axes">
            <text x="689" y="714" fill="#744c56">PRT_CSYS_DEF</text>
            <text x="822" y="683" fill="#48e22c">Y</text>
            <text x="856" y="734" fill="#f0372f">X</text>
            <text x="799" y="745" fill="#7fe6cb">Z</text>
          </g>
          <path d="M1156.5 319.5v16l3.500 -3l3 6.500l2.500 -1l-3 -6.500h5z" fill="#fff" stroke="#111" />
        </svg>
        <div class="viewtools">
          <button v-for="[name, tip] in viewTools" :key="name" type="button" :aria-label="tip" :class="{ on: name === 'annotate' }">
            <Icon :name="name" size="20" />
          </button>
        </div>
      </div>
    </main>

    <footer class="status">
      <button type="button" class="on" aria-label="Navigator"><Icon name="navigator" size="20" /></button>
      <button type="button" aria-label="Browser"><Icon name="globe" size="20" /></button>
      <button type="button" aria-label="Full screen"><Icon name="square" size="20" /></button>
      <p><span class="bullet"></span>Datum planes will be displayed.</p>
      <div class="finder">
        <button type="button" aria-label="Find"><Icon name="binoculars" size="20" /></button>
        <button type="button" class="finddrop" aria-label="Find options"><i class="tri"></i></button>
      </div>
      <div class="chooser">
        <select v-model="filter" aria-label="Selection filter">
          <option>Geometry</option>
        </select>
        <span><i class="tri"></i></span>
      </div>
    </footer>
  </div>
</template>

<style>
body { margin: 0; }
</style>

<style scoped>
* { box-sizing: border-box; }
.app {
  display: flex;
  flex-direction: column;
  min-height: 100vh;
  background: #f8f9fb;
  color: #4b4d4f;
  font: 14px/20px "Open Sans", "Noto Sans", sans-serif;
}
button { margin: 0; padding: 0; border: 0; background: none; color: inherit; font: inherit; }
svg { flex: none; display: block; }
.defs { position: absolute; }
.tri {
  flex: none;
  width: 0;
  height: 0;
  border: 4px solid transparent;
  border-top: 5px solid #58595b;
  border-bottom: 0;
}
.light .tri { border-top-color: #a5aaac; }

.titlebar { display: flex; align-items: center; height: 34px; background: #d8e0df; position: relative; }
.brand { display: flex; align-items: center; width: 102px; padding-left: 9px; color: #4f5458; }
.brand .name { margin-left: 5px; padding-bottom: 2px; font: 23px/28px "Lato", sans-serif; }
.brand .dot { align-self: flex-start; font-size: 10px; line-height: 20px; }
.quick { display: flex; align-items: center; height: 100%; }
.quick button { display: flex; align-items: center; justify-content: center; height: 100%; }
.quick .tool { width: 30px; }
.quick .drop { width: 16px; }
.quick .dark { width: 18px; }
.quick .customize { width: 30px; height: 30px; border-left: 1px solid #a9afb1; }
.customize .tri { position: relative; margin-top: 3px; }
.customize .tri::before { content: ""; position: absolute; left: -5px; top: -8px; width: 10px; height: 2px; background: #58595b; }
.titlebar h1 { position: absolute; left: 0; right: 0; margin: 0; text-align: center; font: 16px/34px "Noto Sans", sans-serif; color: #b4bbbc; pointer-events: none; }
.window { display: flex; gap: 13px; margin-left: auto; padding-right: 9px; }

.tabs { display: flex; height: 35px; background: #3f4647; color: #f4f6f6; font-size: 16px; line-height: 35px; }
.tabs > button { padding: 1px 29px 0; }
.tabs > .file { padding: 1px 25px 0; background: linear-gradient(160deg, #65cf3d, #4ea733); }
.tabs > .active { padding: 1px 28px 0; background: #f8f9fb; color: #48892e; }
.helpers { display: flex; align-items: center; gap: 8px; margin-left: auto; padding-right: 9px; }
.helpers button { display: flex; align-items: center; }
.helpers .tri { border-top-color: #fff; margin-left: 8px; }
.helpers .help { width: 14px; justify-content: center; margin-left: 6px; font-weight: 700; font-size: 17px; line-height: 20px; }

.ribbon { display: flex; height: 136px; border-bottom: 1px solid #b9bec0; }
.group { display: flex; flex-direction: column; flex: none; margin: 1px 0; border-right: 1px solid #b4b7ba; }
.cols { display: grid; justify-content: start; height: 102px; }
.operations { width: 140px; }
.operations .cols { grid-template-columns: 92px 46px; }
.data { width: 183px; }
.body { width: 174px; }
.data .cols, .body .cols { padding-left: 6px; }
.datum { width: 270px; }
.datum .cols { grid-template-columns: 56px 159px 50px; }
.shapes { width: 185px; }
.shapes .cols { grid-template-columns: 66px 116px; }
.engineering { width: 201px; }
.engineering .cols { grid-template-columns: 108px 84px; padding-left: 6px; }
.editing { width: 445px; }
.editing .cols { grid-template-columns: 62px 78px 91px 85px 128px; }
.surfaces { width: 173px; }
.surfaces .cols { grid-template-columns: 79px 93px; }
.intent { width: 111px; }
.intent .cols { grid-template-columns: 110px; }
.list { display: flex; flex-direction: column; align-items: flex-start; padding-left: 2px; }
.item { display: flex; align-items: center; height: 34px; white-space: nowrap; }
.item span { margin-left: 5px; }
.item .tri { margin-left: 9px; }
.item.off { color: #b3b4b6; }
.operations .item .tri { border-top-color: #a5a7a9; }
.big { display: flex; flex-direction: column; align-items: center; padding-top: 6px; }
.caption { display: flex; flex-direction: column; margin-top: 12px; }
.big .tri { margin-top: 7px; }
.label { display: flex; align-items: center; justify-content: center; gap: 5px; height: 32px; padding-top: 4px; white-space: nowrap; }

.work { display: flex; flex: 1; min-height: 600px; }
.side { width: 351px; flex: none; border-right: 3px solid #d8dfe0; background: #f8fafb; }
.sidetabs { display: flex; height: 32px; background: #d8dfdf; }
.sidetabs button { display: flex; align-items: center; justify-content: center; width: 38px; }
.sidetabs .active { width: 39px; background: #f8fafb; }
.sidetools { display: flex; align-items: center; height: 40px; padding-left: 13px; }
.sidetools button { display: flex; align-items: center; justify-content: center; width: 30px; height: 30px; }
.sidetools .first { width: 22px; }
.grip { width: 3px; height: 18px; margin: 0 18px 0 5px; border-left: 3px dotted #bfc2c4; }
.on { border: 1px solid #a9acae; background: #dcdfe0; }
.bar { width: 1px; height: 30px; margin: 0 5px; background: #a9acae; }
.sidetools .more { width: 24px; margin-left: 13px; padding-bottom: 3px; font-size: 20px; line-height: 20px; font-weight: 600; }
.find { display: flex; align-items: center; height: 34px; padding-left: 14px; }
.field { display: flex; align-items: center; width: 252px; height: 34px; margin-left: 4px; border: 1px solid #a3a9ab; background: #fff; }
.field input { flex: 1; min-width: 0; height: 100%; border: 0; background: none; font: inherit; outline: none; }
.field button { width: 22px; }
.pick { display: flex; width: 22px; justify-content: center; }
.add { margin-left: 4px; }
.tree { margin: 7px 0 0; padding: 0; list-style: none; font-family: "Noto Sans", sans-serif; font-size: 12px; }
.tree li { display: flex; align-items: center; height: 22px; padding-left: 15px; }
.tree .root { padding-left: 14px; }
.tree .root span { margin-left: 7px; }
.tree li > svg + span { margin-left: 6px; }
.twist { width: 23px; padding-left: 5px; }
.twist i { display: block; width: 0; height: 0; border: 5px solid transparent; border-left: 9px solid #8f9193; border-right: 0; }
.insert { height: 9px; margin: 4px 6px 0 13px; border: 2px solid #6cbf52; border-width: 0 2px; background: linear-gradient(#6cbf52, #6cbf52) center / 100% 2px no-repeat; }

.view { position: relative; flex: 1; min-width: 0; background: #e8e9ed; }
.model { width: 100%; height: 100%; }
.axes { font: 16px "Liberation Sans", sans-serif; }
.viewtools { position: absolute; top: 7px; left: 525px; display: flex; gap: 2px; height: 38px; padding: 0 3px; align-items: center; border: 1px solid #9da1a5; background: #f8f9fb; }
.viewtools button { display: flex; align-items: center; justify-content: center; width: 30px; height: 30px; }

.status { display: flex; align-items: center; height: 42px; padding: 0 21px 0 7px; border-top: 1px solid #b4b7bb; background: #f8fafa; font-size: 12px; }
.status > button { display: flex; align-items: center; justify-content: center; width: 30px; height: 30px; }
.status > .on { width: 27px; margin-right: 1px; }
.status p { display: flex; align-items: center; height: 30px; margin: 0 auto 0 8px; padding: 0 0 2px 7px; border-left: 1px solid #a9acae; font-family: "Noto Sans", sans-serif; }
.bullet { width: 6px; height: 6px; margin: 0 6px 2px 0; border-radius: 50%; background: #17648a; }
.finder { display: flex; height: 32px; margin-right: 119px; padding: 1px 2px; border: solid #b4b7b9; border-width: 0 1px; position: relative; }
.finder::before { content: ""; position: absolute; left: -6px; top: 0; bottom: 0; width: 1px; background: #b4b7b9; }
.finder button { display: flex; align-items: center; justify-content: center; width: 34px; border: 1px solid #c0c3c5; }
.finder .finddrop { width: 18px; border-left: 0; }
.chooser { position: relative; width: 217px; height: 28px; }
.chooser select { width: 100%; height: 100%; padding: 0 8px; border: 1px solid #a6a9ab; border-radius: 0; background: #f8f9fa; color: #55585a; font: 14px "Open Sans", "Noto Sans", sans-serif; appearance: none; }
.chooser span { position: absolute; right: 0; top: 0; bottom: 0; display: flex; width: 20px; align-items: center; justify-content: center; border-left: 1px solid #a6a9ab; pointer-events: none; }
</style>
